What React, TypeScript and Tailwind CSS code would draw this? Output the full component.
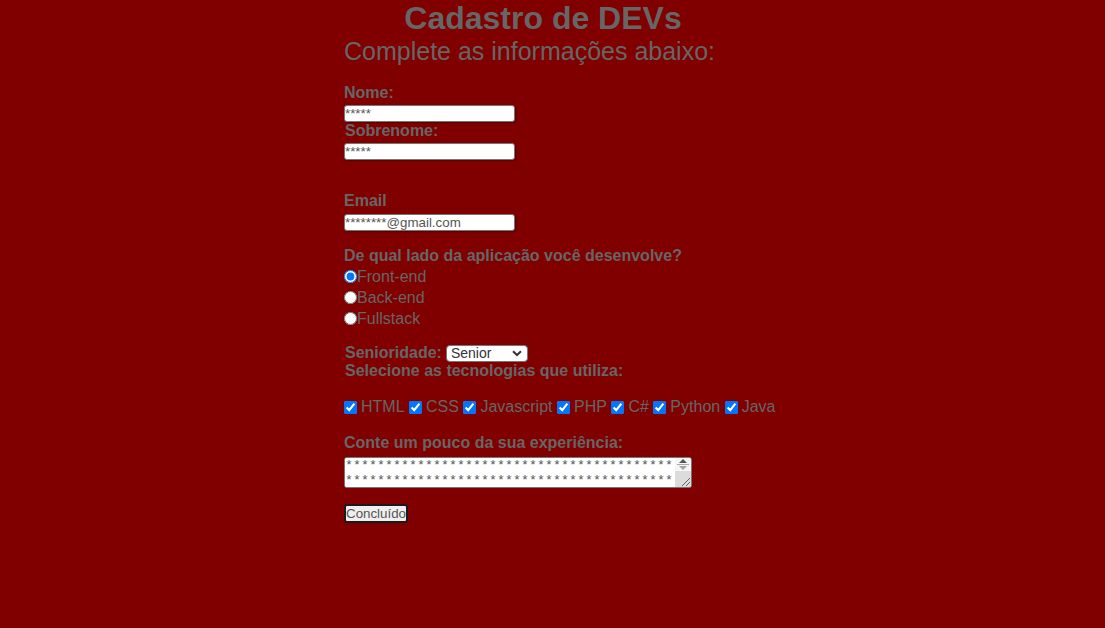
import React from "react";

const techs = ["HTML", "CSS", "Javascript", "PHP", "C#", "Python", "Java"];

const sides = [
  { id: "front", label: "Front-end", checked: true },
  { id: "back", label: "Back-end", checked: false },
  { id: "full", label: "Fullstack", checked: false },
];

const stars = "*".repeat(41);

const inputCls =
  "block w-[171px] h-[17px] bg-white border border-[#767676] rounded-[3px] px-0 py-0 text-[13.33px] leading-[15px] text-[#555] font-['Liberation_Sans',Arial,sans-serif] shadow-[1px_1px_2px_rgba(0,0,0,0.35)]";

export default function App() {
  return (
    <div className="min-h-screen bg-[#800000] text-[#666] font-['Liberation_Sans',Arial,sans-serif]">
      <form className="w-[417px] mx-auto">
        <h1 className="pr-[19px] text-center text-[32px] font-bold leading-[37px]">Cadastro de DEVs</h1>
        <h2 className="text-[25px] leading-[29px]">Complete as informações abaixo:</h2>

        <label className="block mt-[18px] text-[16px] font-bold leading-[18px]">Nome:</label>
        <input className={`${inputCls} mt-[3px]`} defaultValue="*****" />
        <label className="block pl-px text-[16px] font-bold leading-[18px]">Sobrenome:</label>
        <input className={`${inputCls} mt-[3px]`} defaultValue="*****" />

        <label className="block mt-[32px] text-[16px] font-bold leading-[18px]">Email</label>
        <input className={`${inputCls} mt-[4px]`} defaultValue="********@gmail.com" />

        <p className="mt-[16px] text-[16px] font-bold leading-[18px]">De qual lado da aplicação você desenvolve?</p>
        <div className="mt-[1px] flex flex-col">
          {sides.map((s) => (
            <label key={s.id} className="flex items-center h-[21px] text-[16px]">
              <input
                type="radio"
                name="lado"
                defaultChecked={s.checked}
                className="m-0 w-[13px] h-[13px] accent-[#0075ff]"
              />
              <span>{s.label}</span>
            </label>
          ))}
        </div>

        <div className="mt-[14px] flex items-start h-[19px] pl-px">
          <span className="text-[16px] font-bold leading-[19px]">Senioridade:</span>
          <div className="relative ml-[4px] mt-[2px] w-[82px] h-[17px]">
            <select
              defaultValue="Senior"
              className="block appearance-none w-full h-full bg-white text-[#333] border border-[#767676] rounded-[4px] text-[14px] leading-[15px] pl-[4px]"
            >
              <option>Junior</option>
              <option>Pleno</option>
              <option>Senior</option>
            </select>
            <svg className="absolute right-[6px] top-[5px] pointer-events-none" width="10" height="7" viewBox="0 0 10 7">
              <path d="M1 1.2 L5 5 L9 1.2" fill="none" stroke="#333" strokeWidth="2" />
            </svg>
          </div>
        </div>
        <p className="pl-px text-[16px] font-bold leading-[18px]">Selecione as tecnologias que utiliza:</p>

        <div className="mt-[18px] flex items-center h-[18px] text-[16px] whitespace-nowrap">
          {techs.map((t) => (
            <label key={t} className="flex items-center mr-[4.5px]">
              <input type="checkbox" defaultChecked className="m-0 w-[13px] h-[13px] accent-[#0075ff]" />
              <span className="ml-[4px]">{t}</span>
            </label>
          ))}
        </div>

        <p className="mt-[18px] text-[16px] font-bold leading-[18px]">Conte um pouco da sua experiência:</p>
        <div className="mt-[5px] flex w-[348px] h-[31px] bg-white border border-[#767676] rounded-[3px] overflow-hidden">
          <textarea
            readOnly
            defaultValue={`${stars}\n${stars}\n${stars}`}
            className="flex-1 h-full bg-white px-0 py-0 text-[13.33px] leading-[15px] text-[#555] font-['Liberation_Mono','Courier_New',monospace] overflow-hidden resize-none outline-none"
          />
          <div className="w-[16px] h-full flex flex-col">
            <div className="h-[13px] bg-[#f5f5f5] flex flex-col items-center justify-center gap-[1px]">
              <svg width="8" height="4" viewBox="0 0 8 4">
                <path d="M0 4 L4 0 L8 4 Z" fill="#555" />
              </svg>
              <div className="w-[12px] h-px bg-[#aaa]" />
              <svg width="8" height="4" viewBox="0 0 8 4">
                <path d="M0 0 L4 4 L8 0 Z" fill="#a3a3a3" />
              </svg>
            </div>
            <div className="flex-1 bg-[#dcdcdc] flex items-end justify-end">
              <svg width="12" height="12" viewBox="0 0 12 12">
                <path d="M11 3 L3 11 M11 7 L7 11" stroke="#666" strokeWidth="1" />
              </svg>
            </div>
          </div>
        </div>

        <button
          type="button"
          className="block mt-[16px] h-[19px] px-0 bg-[#efefef] text-[#555] border-2 border-[#1a1a1a] rounded-[3px] text-[13.33px] leading-[13px]"
        >
          Concluído
        </button>
      </form>
    </div>
  );
}
